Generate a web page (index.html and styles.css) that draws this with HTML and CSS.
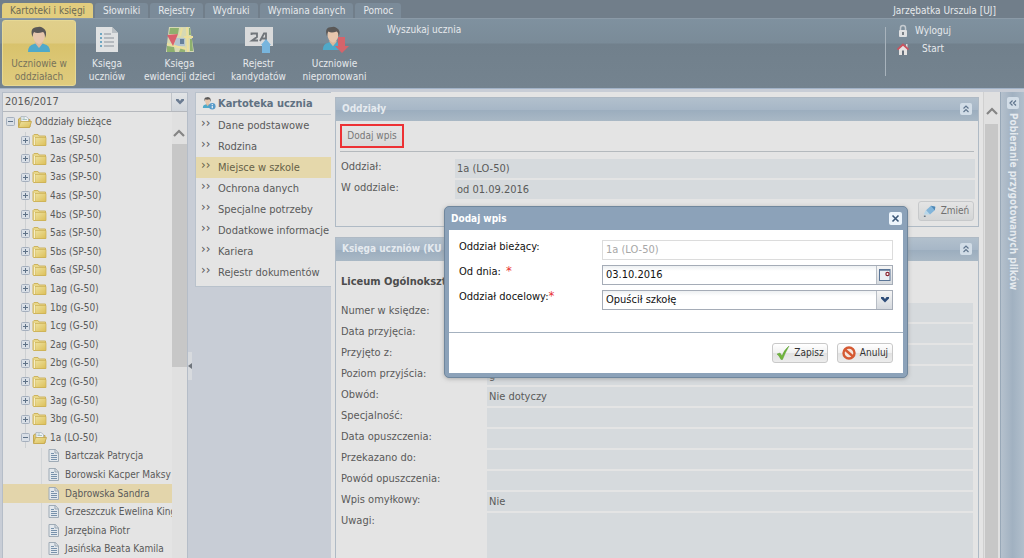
FILE: index.html
```html
<!DOCTYPE html>
<html lang="pl">
<head>
<meta charset="utf-8">
<title>Kartoteki i księgi</title>
<link rel="stylesheet" href="styles.css">
</head>
<body>
<svg class="defs" aria-hidden="true">
  <defs>
    <linearGradient id="gold" x1="0" y1="0" x2="1" y2="1"><stop offset="0" stop-color="#eee2a0"/><stop offset="1" stop-color="#dcbf58"/></linearGradient>
    <symbol id="folder" viewBox="0 0 15 14"><path d="M1 12V2.500L2 1.500H6L7 3H13.500V12.500H1.500Z" fill="#e8d78a" stroke="#cdb35e"/><path d="M3 4.500H14V12.500H3Z" fill="url(#gold)" stroke="#cbb055" stroke-width=".7"/><path d="M2.500 4V12" stroke="#f4edc8"/></symbol>
    <symbol id="folder-open" viewBox="0 0 15 14"><path d="M1.500 12V4L3 3H7L8 4.500H13V12Z" fill="#e0c869" stroke="#c2a855"/><path d="M4 1.500H9L11.500 3.500V8H4Z" fill="#eef1f4" stroke="#a3adb8" stroke-width=".7"/><path d="M5.500 3H8M5.500 4.500H10" stroke="#8bb0a9" stroke-width=".7"/><path d="M3.500 6.500H14.500L12.500 12.500H1.500Z" fill="url(#gold)" stroke="#c3a54a" stroke-width=".8"/></symbol>
    <symbol id="page" viewBox="0 0 12 14"><path d="M1 .5H7.500L10.500 4V12.500H1Z" fill="#e3e8ed" stroke="#9fabb6"/><path d="M7 .5V4H10.500" fill="none" stroke="#97a4b0"/><path d="M3 4.500H6M3 6.500H9M3 8.500H9M3 10.500H9" stroke="#7791ab"/></symbol>
    <symbol id="plus" viewBox="0 0 9 9"><rect x=".5" y=".5" width="8" height="8" rx="1" fill="#d9dfe6" stroke="#a5afbd"/><path d="M2 4.500H7M4.500 2V7" stroke="#5f7287"/></symbol>
    <symbol id="minus" viewBox="0 0 9 9"><rect x=".5" y=".5" width="8" height="8" rx="1" fill="#d9dfe6" stroke="#a5afbd"/><path d="M2 4.500H7" stroke="#5f7287"/></symbol>
    <symbol id="person" viewBox="0 0 26 27"><path d="M2 26Q2 19 8 18L13 16L18 18Q24 19 24 26Z" fill="#4fa9c9"/><path d="M9 17L13 22L17 17L16 14H10Z" fill="#dcb79b"/><path d="M7 7Q7 3 13 3Q19 3 19 8Q19 16 13 18Q7 16 7 9Z" fill="#e6c6ad"/><path d="M6.500 11Q3 1 12 1Q14 0 17 2Q22 5 19 12Q19 7 17 6Q11 8 8 6Q7 7 6.500 11Z" fill="#5a5857"/></symbol>
    <symbol id="up2" viewBox="0 0 12 12"><rect width="12" height="12" rx="2" fill="#d2dde7"/><path d="M3.500 5.500L6 3L8.500 5.500M3.500 9L6 6.500L8.500 9" fill="none" stroke="#60758d" stroke-width="1.200"/></symbol>
    <symbol id="scroll-up" viewBox="0 0 12 8"><path d="M1 7L6 2L11 7" fill="none" stroke="#858585" stroke-width="2.200"/></symbol>
    <symbol id="down" viewBox="0 0 8 6"><path d="M0 0H2.500L4 2L5.500 0H8V1.500L4 5.500L0 1.500Z" fill="currentColor"/></symbol>
  </defs>
</svg>
<div class="app">
  <header class="header">
    <nav class="tabs">
      <button class="tab tab-active">Kartoteki i księgi</button>
      <button class="tab">Słowniki</button>
      <button class="tab">Rejestry</button>
      <button class="tab">Wydruki</button>
      <button class="tab">Wymiana danych</button>
      <button class="tab">Pomoc</button>
      <span class="user">Jarzębatka Urszula [UJ]</span>
    </nav>
    <div class="ribbon">
      <button class="tool tool-active"><svg class="tool-icon" viewBox="0 0 26 27"><use href="#person"/></svg>Uczniowie w<br>oddziałach</button>
      <button class="tool tool-books"><svg class="tool-icon" viewBox="0 0 26 27"><path d="M2 1H18L24 7V26H2Z" fill="#dfe1e2"/><path d="M18 1V7H24Z" fill="#b9bfc4"/><path d="M6 8H8M6 12H8M6 16H8M6 20H8" stroke="#4a93b7" stroke-width="1.500"/><path d="M10 8H17M10 12H20M10 16H20M10 20H20" stroke="#8a9299" stroke-width="1.200"/></svg>Księga<br>uczniów</button>
      <button class="tool tool-map"><svg class="tool-icon tool-icon-wide" viewBox="0 0 28 27"><path d="M3 1H24L28 26H0Z" fill="#d6d9b4"/><path d="M4 2H13L12 8H3ZM1 20L8 21L9 26H1ZM24 2L25 9H23V2ZM24 13H26L27 25H24Z" fill="#8db06e"/><path d="M13 26L15 21L19 23V26Z" fill="#94b374"/><path d="M10 12H19V20H8Z" fill="#b3c4cf"/><path d="M16 2L14 10M18 11H27M21 1L22 26M1 18L20 23" stroke="#ecdf9b" stroke-width="2" fill="none"/><path d="M14 13H18V18H14Z" fill="#66809a"/><path d="M1 9L12 8L7 20Z" fill="#d8606c"/></svg>Księga<br>ewidencji dzieci</button>
      <button class="tool tool-register"><svg class="tool-icon tool-icon-wide" viewBox="0 0 28 27"><path d="M0 1H28V20H0Z" fill="#d9dadb"/><path d="M6.500 9V7.500H12V11L7 14.500H13M15 15L19 7.500H21V15M16.500 12.500H21" fill="none" stroke="#70757a" stroke-width="1.800"/><path d="M21 13L26 19H25V28H17V19H16Z" fill="#78b5dd"/></svg>Rejestr<br>kandydatów</button>
      <button class="tool tool-notpromoted"><svg class="tool-icon tool-icon-wide" viewBox="0 0 28 27"><use href="#person" width="24" height="25"/><path d="M17 11H24V20H28L21 27L14 20H17Z" fill="#d4646b"/></svg>Uczniowie<br>niepromowani</button>
      <a class="search" href="#">Wyszukaj ucznia</a>
      <div class="session">
        <a href="#"><svg viewBox="0 0 12 14"><path d="M3.500 6V4Q3.500 1.500 6 1.500T8.500 4V6" fill="none" stroke="#c6cbd0" stroke-width="1.500"/><rect x="2" y="6" width="8" height="7" rx="1" fill="#e0e1e2"/><path d="M6 8V11" stroke="#5a6068" stroke-width="1.500"/></svg>Wyloguj</a>
        <a class="start" href="#"><svg viewBox="0 0 12 14"><path d="M2 6L6 3L10 6V13H2Z" fill="#e6e3e2"/><path d="M9 2H10.500V6H9Z" fill="#dcd9d9"/><path d="M.5 7.500L6 2.500L11.500 7.500" fill="none" stroke="#c9535f" stroke-width="1.800"/><path d="M5 8.500H7V13H5Z" fill="#66707c"/></svg>Start</a>
      </div>
    </div>
  </header>
  <div class="workspace">
    <aside class="sidebar">
      <div class="year"><select class="year-select" aria-label="Rok szkolny"><option>2016/2017</option></select><span class="year-trigger"><svg class="year-arrow" viewBox="0 0 8 6"><use href="#down"/></svg></span></div>
      <div class="tree-area">
        <ul class="tree">
          <li class="root"><svg class="toggle"><use href="#minus"/></svg><svg class="folder"><use href="#folder-open"/></svg>Oddziały bieżące</li>
          <li><svg class="toggle"><use href="#plus"/></svg><svg class="folder"><use href="#folder"/></svg>1as (SP-50)</li>
          <li><svg class="toggle"><use href="#plus"/></svg><svg class="folder"><use href="#folder"/></svg>2as (SP-50)</li>
          <li><svg class="toggle"><use href="#plus"/></svg><svg class="folder"><use href="#folder"/></svg>3as (SP-50)</li>
          <li><svg class="toggle"><use href="#plus"/></svg><svg class="folder"><use href="#folder"/></svg>4as (SP-50)</li>
          <li><svg class="toggle"><use href="#plus"/></svg><svg class="folder"><use href="#folder"/></svg>4bs (SP-50)</li>
          <li><svg class="toggle"><use href="#plus"/></svg><svg class="folder"><use href="#folder"/></svg>5as (SP-50)</li>
          <li><svg class="toggle"><use href="#plus"/></svg><svg class="folder"><use href="#folder"/></svg>5bs (SP-50)</li>
          <li><svg class="toggle"><use href="#plus"/></svg><svg class="folder"><use href="#folder"/></svg>6as (SP-50)</li>
          <li><svg class="toggle"><use href="#plus"/></svg><svg class="folder"><use href="#folder"/></svg>1ag (G-50)</li>
          <li><svg class="toggle"><use href="#plus"/></svg><svg class="folder"><use href="#folder"/></svg>1bg (G-50)</li>
          <li><svg class="toggle"><use href="#plus"/></svg><svg class="folder"><use href="#folder"/></svg>1cg (G-50)</li>
          <li><svg class="toggle"><use href="#plus"/></svg><svg class="folder"><use href="#folder"/></svg>2ag (G-50)</li>
          <li><svg class="toggle"><use href="#plus"/></svg><svg class="folder"><use href="#folder"/></svg>2bg (G-50)</li>
          <li><svg class="toggle"><use href="#plus"/></svg><svg class="folder"><use href="#folder"/></svg>2cg (G-50)</li>
          <li><svg class="toggle"><use href="#plus"/></svg><svg class="folder"><use href="#folder"/></svg>3ag (G-50)</li>
          <li><svg class="toggle"><use href="#plus"/></svg><svg class="folder"><use href="#folder"/></svg>3bg (G-50)</li>
          <li><svg class="toggle"><use href="#minus"/></svg><svg class="folder"><use href="#folder-open"/></svg>1a (LO-50)</li>
          <li class="pupil"><svg class="page"><use href="#page"/></svg>Bartczak Patrycja</li>
          <li class="pupil"><svg class="page"><use href="#page"/></svg>Borowski Kacper Maksy</li>
          <li class="pupil selected"><svg class="page"><use href="#page"/></svg>Dąbrowska Sandra</li>
          <li class="pupil"><svg class="page"><use href="#page"/></svg>Grzeszczuk Ewelina King</li>
          <li class="pupil"><svg class="page"><use href="#page"/></svg>Jarzębina Piotr</li>
          <li class="pupil"><svg class="page"><use href="#page"/></svg>Jasińska Beata Kamila</li>
        </ul>
        <div class="scrollbar"><svg class="scroll-arrow"><use href="#scroll-up"/></svg><div class="thumb"></div></div>
      </div>
    </aside>
    <div class="splitter"><span class="grip"><svg viewBox="0 0 4 6"><path d="M4 0V6L0 3Z" fill="#6e747c"/></svg></span></div>
    <nav class="card-nav">
      <h2><svg class="nav-icon" viewBox="0 0 15 15"><use href="#person" width="12" height="13"/><circle cx="11" cy="10.500" r="3.500" fill="#579ac9"/><path d="M11 10V12.500M11 8V9" stroke="#f2f6fa" stroke-width="1.200"/></svg>Kartoteka ucznia</h2>
      <a href="#">Dane podstawowe</a>
      <a href="#">Rodzina</a>
      <a href="#" class="current">Miejsce w szkole</a>
      <a href="#">Ochrona danych</a>
      <a href="#">Specjalne potrzeby</a>
      <a href="#">Dodatkowe informacje</a>
      <a href="#">Kariera</a>
      <a href="#">Rejestr dokumentów</a>
    </nav>
    <main class="content">
      <section class="panel panel-first">
        <header class="panel-head"><h3>Oddziały</h3><button class="fold" aria-label="Zwiń"><svg><use href="#up2"/></svg></button></header>
        <div class="toolbar"><button class="add">Dodaj wpis</button></div>
        <dl class="fields fields-short">
          <dt>Oddział:</dt><dd>1a (LO-50)</dd>
          <dt>W oddziale:</dt><dd>od 01.09.2016</dd>
        </dl>
        <button class="btn edit"><svg viewBox="0 0 16 16"><path d="M1 12L3 7L8 12Z" fill="#b8d7ea"/><path d="M3.500 7L9 2L14 3L13.500 7L8 12Z" fill="#82b5da"/><path d="M9 2L14 3L13.500 7Z" fill="#4d86b4"/><path d="M1 14H3" stroke="#5a6c7c" stroke-width="1.500"/></svg>Zmień</button>
      </section>
      <section class="panel panel-book">
        <header class="panel-head"><h3>Księga uczniów (KU</h3><button class="fold" aria-label="Zwiń"><svg><use href="#up2"/></svg></button></header>
        <h4>Liceum Ogólnokszt</h4>
        <dl class="fields fields-long">
          <dt>Numer w księdze:</dt><dd></dd>
          <dt>Data przyjęcia:</dt><dd></dd>
          <dt>Przyjęto z:</dt><dd></dd>
          <dt>Poziom przyjścia:</dt><dd>g</dd>
          <dt>Obwód:</dt><dd>Nie dotyczy</dd>
          <dt>Specjalność:</dt><dd></dd>
          <dt>Data opuszczenia:</dt><dd></dd>
          <dt>Przekazano do:</dt><dd></dd>
          <dt>Powód opuszczenia:</dt><dd></dd>
          <dt>Wpis omyłkowy:</dt><dd>Nie</dd>
          <dt>Uwagi:</dt><dd class="notes"></dd>
        </dl>
      </section>
    </main>
    <div class="scrollbar scrollbar-main"><svg class="scroll-arrow"><use href="#scroll-up"/></svg><div class="thumb"></div></div>
    <aside class="downloads"><button class="expand" aria-label="Rozwiń"><svg viewBox="0 0 12 12"><rect width="12" height="12" rx="2" fill="#d2dde7"/><path d="M5.500 3.500L3 6L5.500 8.500M9 3.500L6.500 6L9 8.500" fill="none" stroke="#60758d" stroke-width="1.200"/></svg></button><span class="downloads-title">Pobieranie przygotowanych plików</span></aside>
  </div>
</div>
<form class="dialog" role="dialog" aria-labelledby="dialog-title">
  <header class="dialog-head"><h2 id="dialog-title">Dodaj wpis</h2><button type="button" class="close" aria-label="Zamknij"><svg viewBox="0 0 13 13"><path d="M3.500 3.500L9.500 9.500M9.500 3.500L3.500 9.500" stroke="#3c5878" stroke-width="1.600"/></svg></button></header>
  <div class="dialog-body">
    <label for="current">Oddział bieżący:</label>
    <div class="control control-disabled"><input id="current" value="1a (LO-50)" disabled></div>
    <label for="from">Od dnia: <span class="required required-gap">*</span></label>
    <div class="control"><input id="from" value="03.10.2016"><button type="button" class="trigger" aria-label="Kalendarz"><svg class="calendar" viewBox="0 0 12 12"><rect x=".5" y=".5" width="10.500" height="11" fill="#e9eef4" stroke="#5a7596"/><path d="M.5 1H11" stroke="#5a7596" stroke-width="1.500"/><circle cx="8.500" cy="5" r="1.600" fill="#fff" stroke="#8b2532" stroke-width="1.200"/></svg></button></div>
    <label for="target">Oddział docelowy:<span class="required">*</span></label>
    <div class="control"><select id="target"><option>Opuścił szkołę</option></select><span class="trigger"><svg class="drop" viewBox="0 0 8 6"><use href="#down"/></svg></span></div>
  </div>
  <footer class="dialog-foot">
    <button type="button" class="btn"><svg viewBox="0 0 14 14"><path d="M1 8L4 7L6 10Q8 4 13 0Q9 7 6.500 13.500H5Q3.500 10 1 8Z" fill="#72b63c" stroke="#4f962a" stroke-width=".4"/></svg>Zapisz</button>
    <button type="button" class="btn"><svg viewBox="0 0 14 14"><circle cx="7" cy="7" r="5.500" fill="#f5e7de" stroke="#d55a33" stroke-width="2.400"/><path d="M3 3.500L11 10.500" stroke="#d55a33" stroke-width="2.400"/></svg>Anuluj</button>
  </footer>
</form>
</body>
</html>
```

FILE: styles.css
```css
* { box-sizing: border-box; }
body { margin: 0; font: 11px/14px "DejaVu Sans Condensed", "Noto Sans", sans-serif; color: #5a5a5a; }
button, input, select { font: inherit; color: inherit; border: 0; padding: 0; margin: 0; background: none; }
select, input { appearance: none; outline: 0; min-width: 0; }
button { cursor: pointer; }
a { color: inherit; text-decoration: none; }
svg { display: block; flex: none; }
ul, dl, dd, h2, h3, h4 { margin: 0; padding: 0; }
.defs { position: absolute; width: 0; height: 0; }

.app { height: 100vh; display: flex; flex-direction: column; overflow: hidden; background: #c8cdd6; }
.header { flex: none; background: #717e8a; color: #e6e9ec; }
.tabs { display: flex; gap: 2px; padding: 3px 28px 0 2px; }
.tab { height: 15px; padding: 0 8px; font-size: 10px; line-height: 14px; border-radius: 3px 3px 0 0; background: #7b8b99; white-space: nowrap; }
.tab-active { background: #e2cd7e; color: #6b6a55; }
.user { margin-left: auto; line-height: 15px; font-size: 10px; }
.ribbon { display: flex; height: 71px; padding: 1px 0 2px 2px; border-top: 1px solid #8b9aa7; border-bottom: 1px solid #a2b3c8; background: linear-gradient(#7f919f 0, #7a8b98 24px, #71808c 25px, #74838f 100%); }
.tool { width: 62px; flex: none; padding-top: 6px; display: flex; flex-direction: column; align-items: center; font-size: 10px; line-height: 13px; white-space: nowrap; border-radius: 3px; }
.tool-active { width: 74px; color: #77735b; background: linear-gradient(#e0cf8b 0, #dfcc84 22px, #d8c26c 23px, #e0cc7e 100%); border: 1px solid #e6d894; padding-top: 5px; }
.tool-map { width: 83px; }
.tool-register { width: 75px; }
.tool-notpromoted { width: 77px; }
.tool-icon { width: 26px; height: 27px; margin-bottom: 4px; }
.tool-icon-wide { width: 28px; }
.search { margin-left: 14px; padding-top: 3px; font-size: 10px; }
.session { margin: 7px 73px 10px auto; padding-left: 11px; border-left: 1px solid #a8b3bc; display: flex; flex-direction: column; font-size: 10px; width: 66px; }
.session a { display: flex; gap: 6px; height: 18px; margin-top: -5px; align-items: center; }
.session .start { gap: 13px; margin-top: 0; }
.session svg { width: 12px; height: 14px; }

.workspace { flex: 1; min-height: 0; display: flex; padding-top: 3px; }
.sidebar { width: 186px; flex: none; margin-left: 2px; display: flex; flex-direction: column; background: #e4e4e4; border: 1px solid #b5bdc8; border-bottom: 0; }
.year { flex: none; display: flex; height: 19px; align-items: stretch; border-bottom: 1px solid #b5b8bd; }
.year-select { flex: 1; padding-left: 2px; }
.year-trigger { width: 16px; display: grid; place-items: center; border-left: 1px solid #c0c4c9; background: linear-gradient(#e2e4e6, #d0d5db); }
.year-arrow { width: 8px; height: 6px; color: #6b7c92; }
.tree-area { flex: 1; min-height: 0; display: flex; }
.tree { flex: 1; min-width: 0; overflow: hidden; list-style: none; display: grid; align-content: start; grid-auto-rows: 19px 18px 19px 18px 19px; background: linear-gradient(#cdd0d2, #cdd0d2) 22px 20px / 1px 316px no-repeat, linear-gradient(#d3d6d8, #d3d6d8) 38px 336px / 1px 100% no-repeat; }
.tree li { display: flex; align-items: center; padding-left: 18px; font-size: 10px; white-space: nowrap; overflow: hidden; }
.tree .root { padding-left: 3px; }
.tree .pupil { padding-left: 45px; }
.tree .selected { background: #e3d5ab; }
.toggle { width: 9px; height: 9px; margin-right: 2px; }
.folder { width: 15px; height: 14px; margin-right: 3px; }
.page { width: 12px; height: 14px; margin-right: 5px; }
.scrollbar { width: 15px; flex: none; display: flex; flex-direction: column; background: #e0e0e0; }
.scroll-arrow { width: 12px; height: 8px; margin: 17px 1px 7px; }
.thumb { height: 50%; background: #c7c7c7; }
.scrollbar-main .scroll-arrow { margin: 15px 1px 9px; }
.scrollbar-main .thumb { flex: 1; margin-right: 2px; }
.splitter { width: 7px; flex: none; display: flex; align-items: center; padding-top: 82px; }
.grip { width: 4px; height: 28px; background: #d7dade; display: flex; align-items: center; }
.grip svg { width: 4px; height: 6px; }

.card-nav { width: 136px; flex: none; align-self: flex-start; background: #e4e4e4; border: 1px solid #b9c2cc; border-right: 0; padding-bottom: 3px; }
.card-nav h2 { display: flex; align-items: center; height: 22px; padding-left: 6px; gap: 2px; font-size: 11px; color: #607182; border-bottom: 1px solid #c5cbd1; white-space: nowrap; }
.nav-icon { width: 14px; height: 15px; }
.card-nav a { display: flex; align-items: center; height: 21px; padding-left: 5px; white-space: nowrap; }
.card-nav a::before { content: "››"; width: 17px; flex: none; font-size: 13px; line-height: 14px; margin-top: -5px; }
.card-nav .current { background: #e5d8ab; color: #666148; }

.content { flex: 1; min-width: 0; overflow: hidden; display: flex; flex-direction: column; gap: 10px; padding: 5px 4px 0 4px; background: #e4e4e4; }
.panel { border: 1px solid #afbac5; }
.panel-first { height: 130px; flex: none; display: flex; flex-direction: column; }
.panel-book { flex: 1; min-height: 0; overflow: hidden; border-bottom: 0; }
.panel-head { display: flex; justify-content: space-between; align-items: center; height: 23px; flex: none; padding: 0 6px 2px; background: linear-gradient(#b2c0cd, #a7b7c7 50%, #9badbe 51%, #a9b8c5); }
.panel-head h3 { font-size: 10px; color: #e5eaef; }
.fold, .fold svg { width: 12px; height: 12px; }
.toolbar { height: 31px; flex: none; margin: 0 4px 7px; padding-top: 3px; border-bottom: 1px solid #b4b9bd; }
.add { width: 64px; height: 24px; border: 2px solid #ed3134; background: linear-gradient(#e4e4e4, #d9d9d9); color: #777; font-size: 10px; }
.fields { display: grid; row-gap: 2px; }
.fields dt { line-height: 16px; }
.fields dd { background: #d6dadd; padding: 3px 2px 0; line-height: 14px; }
.fields-short { grid-template: repeat(2, 19px) / 114px 1fr; margin: 0 3px 0 5px; }
.fields-long { grid-template-columns: 146px 1fr; grid-auto-rows: 19px; margin: 0 5px; }
.fields-long .notes { height: 60px; }
.panel-book h4 { margin: 14px 5px; line-height: 14px; font-size: 11px; color: #4c4c4c; }
.btn { display: flex; align-items: center; justify-content: center; gap: 4px; width: 56px; height: 20px; border: 1px solid #c9c9c9; border-radius: 3px; background: linear-gradient(#fff, #f1f1f1 50%, #e2e2e2 51%, #ececec); color: #333; font-size: 10px; }
.btn svg { width: 14px; height: 14px; }
.edit { align-self: flex-end; margin: 2px 4px 0 0; background: linear-gradient(#e4e4e4, #d3d5d6); color: #707070; border-color: #c7c9cb; }
.scrollbar-main { width: 17px; padding-left: 1px; border-left: 1px solid #d0d0d0; }
.downloads { width: 24px; flex: none; border-left: 1px solid #98a8b8; display: flex; flex-direction: column; align-items: center; gap: 4px; padding-top: 5px; background: linear-gradient(90deg, #b5c1cd, #a1b1c1 50%, #b1bfcc); color: #e5eaef; }
.expand, .expand svg { width: 12px; height: 12px; }
.downloads-title { writing-mode: vertical-rl; font-weight: bold; font-size: 10px; line-height: 14px; white-space: nowrap; }

.dialog { position: absolute; left: 444px; top: 206px; width: 464px; padding: 0 4px 4px; border: 1px solid #70879d; border-radius: 5px; background: #8ca2b9; box-shadow: 0 1px 4px #8889; color: #111; }
.dialog-head { display: flex; align-items: center; justify-content: space-between; height: 23px; padding: 0 1px 0 2px; }
.dialog-head h2 { font-size: 10px; color: #fff; }
.close { width: 13px; height: 13px; border-radius: 2px; background: #edf5fc; }
.dialog-body { display: grid; grid-template-columns: 143px 1fr; grid-auto-rows: 20px; row-gap: 5px; padding: 10px 10px 22px; background: #fff; }
.dialog-body label { line-height: 14px; white-space: nowrap; }
.required { color: #e93434; font-size: 13px; line-height: 10px; }
.required-gap { margin-left: 2px; }
.control { display: flex; border: 1px solid #a5acb7; background: linear-gradient(#edf0f2, #fff 5px); }
.control input, .control select { flex: 1; padding-left: 3px; }
.control-disabled { border-color: #dcdcdc; background: #fff; color: #a7a7a7; }
.trigger { width: 16px; flex: none; display: grid; place-items: center; border-left: 1px solid #b8bec6; background: linear-gradient(#f5f5f5, #d5d9de); color: #2d4c78; }
.calendar { width: 12px; height: 12px; }
.drop { width: 8px; height: 6px; }
.dialog-foot { display: flex; justify-content: flex-end; gap: 9px; padding: 10px; border-top: 1px solid #a4b1bf; background: #fff; }
```
